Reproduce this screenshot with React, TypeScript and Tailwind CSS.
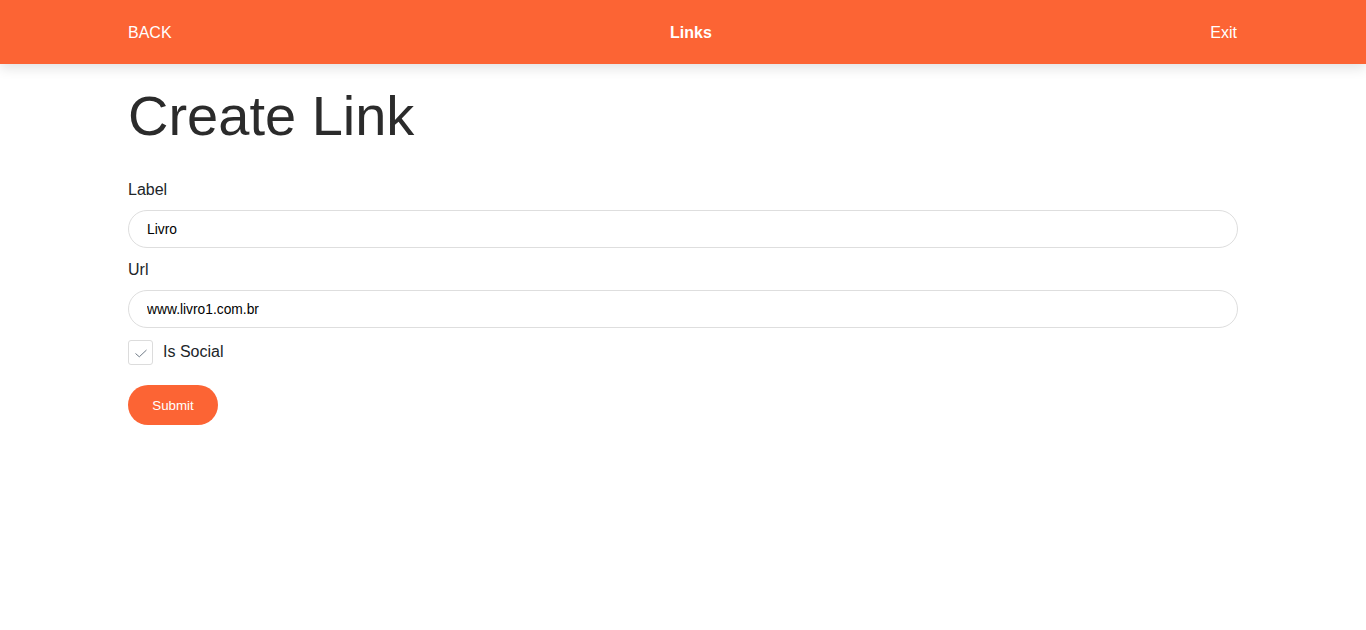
import React from "react";

const NavBar: React.FC = () => {
  return (
    <header className="h-16 w-full bg-[#fc6434] shadow-[0_4px_12px_rgba(0,0,0,0.12)]">
      <div className="mx-auto flex h-full w-[1110px] flex-row items-center justify-between pt-[2px] text-base text-white">
        <a href="#">BACK</a>
        <span className="font-bold">Links</span>
        <a href="#" className="mr-px">Exit</a>
      </div>
    </header>
  );
};

const Field: React.FC<{ label: string; value: string }> = ({ label, value }) => (
  <div className="flex flex-col">
    <label className="mb-2 text-base leading-6 text-[#212529]">{label}</label>
    <input
      defaultValue={value}
      className="h-[38px] w-full rounded-full border border-[#dedede] px-[18px] text-[13.8px] text-black outline-none"
    />
  </div>
);

export default function App() {
  return (
    <div className="min-h-screen bg-white font-['Liberation_Sans',Arial,sans-serif]">
      <NavBar />
      <main className="mx-auto w-[1110px]">
        <h1 className="mt-[18px] text-[56px] leading-[1.2] font-light text-[#2b2b2b]">Create Link</h1>
        <form className="mt-[29px] flex flex-col" onSubmit={(e) => e.preventDefault()}>
          <div className="flex flex-col gap-[10px]">
            <Field label="Label" value="Livro" />
            <Field label="Url" value="www.livro1.com.br" />
          </div>
          <label className="mt-3 flex flex-row items-center gap-[10px] text-base leading-[24px] text-[#212529]">
            <span className="flex h-[25px] w-[25px] items-center justify-center rounded-[3px] border border-[#dcdcdc]">
              <svg width="14" height="14" viewBox="0 0 14 14" fill="none" className="mt-px">
                <path d="M1.5 7.5l3.8 3.3L12.5 4" stroke="#6f7a86" strokeWidth="1" />
              </svg>
            </span>
            <span className="-mt-px">Is Social</span>
          </label>
          <div className="mt-5">
            <button
              type="submit"
              className="h-10 w-[90px] rounded-full bg-[#fc6434] pt-px text-[13.333px] text-white"
            >
              Submit
            </button>
          </div>
        </form>
      </main>
    </div>
  );
}
